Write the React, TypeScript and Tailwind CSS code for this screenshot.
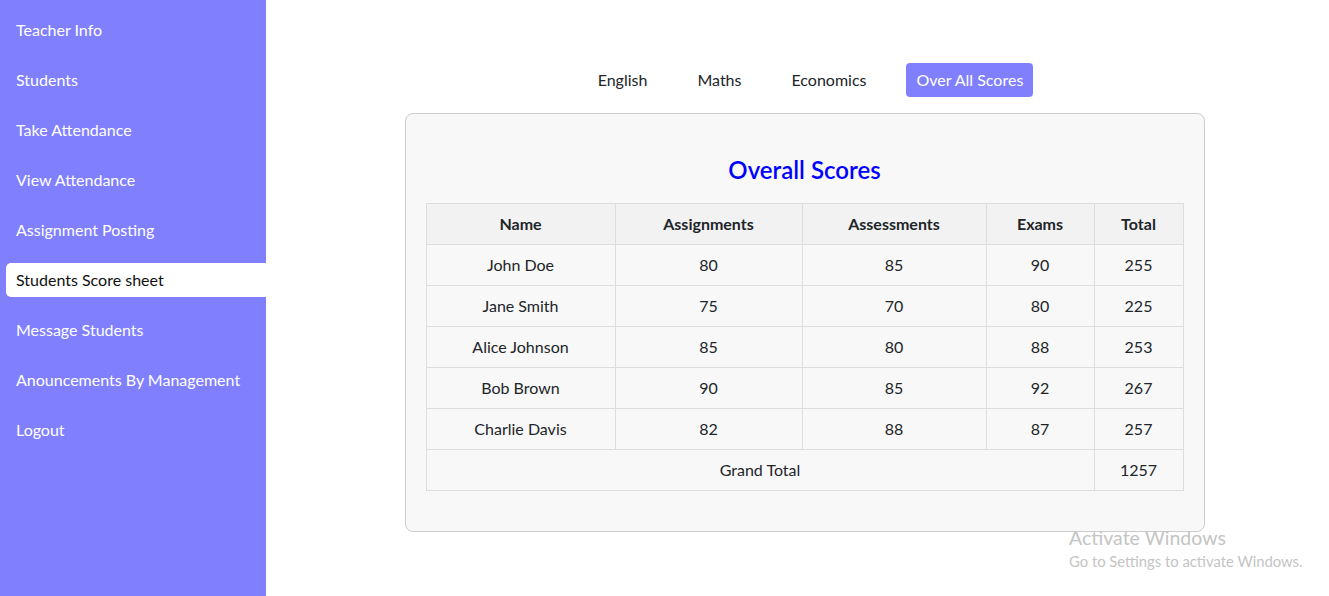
import React from "react";

const navItems = [
  "Teacher Info",
  "Students",
  "Take Attendance",
  "View Attendance",
  "Assignment Posting",
  "Students Score sheet",
  "Message Students",
  "Anouncements By Management",
  "Logout",
];

const rows = [
  ["John Doe", 80, 85, 90, 255],
  ["Jane Smith", 75, 70, 80, 225],
  ["Alice Johnson", 85, 80, 88, 253],
  ["Bob Brown", 90, 85, 92, 267],
  ["Charlie Davis", 82, 88, 87, 257],
];

const tabs = ["English", "Maths", "Economics", "Over All Scores"];

export default function App() {
  return (
    <div
      className="flex w-[1329px] h-[596px] bg-white text-[#212529] overflow-hidden relative"
      style={{ fontFamily: "Lato, 'Open Sans', sans-serif" }}
    >
      <aside className="w-[266px] shrink-0 bg-[#8080ff] pt-[13px]">
        <ul className="flex flex-col gap-[16px]">
          {navItems.map((item) => {
            const active = item === "Students Score sheet";
            return (
              <li
                key={item}
                className={
                  active
                    ? "ml-[6px] h-[34px] flex items-center pl-[10px] bg-white text-[#111] rounded-l-[5px] text-[16px]"
                    : "ml-[6px] h-[34px] flex items-center pl-[10px] text-white text-[16px]"
                }
              >
                {item}
              </li>
            );
          })}
        </ul>
      </aside>

      <main className="flex-1 flex flex-col items-center pt-[63px] pl-[14px]">
        <div className="flex gap-[30px] pl-[12px]">
          {tabs.map((t) => {
            const active = t === "Over All Scores";
            return (
              <button
                key={t}
                className={
                  active
                    ? "h-[34px] px-[10px] rounded-[4px] bg-[#8080ff] text-white text-[16px]"
                    : "h-[34px] px-[10px] rounded-[4px] text-[#212529] text-[16px]"
                }
              >
                {t}
              </button>
            );
          })}
        </div>

        <div className="mt-[16px] w-[800px] border border-[#cccccc] rounded-[8px] bg-[#f8f8f8] p-[20px]">
          <h2 className="mt-[20px] mb-[17px] h-[32px] leading-[32px] text-center text-[24px] font-semibold text-[#0000ff]">
            Overall Scores
          </h2>
          <table className="w-full border-collapse text-[16px] table-fixed">
            <colgroup>
              <col className="w-[189px]" />
              <col className="w-[187px]" />
              <col className="w-[184px]" />
              <col className="w-[108px]" />
              <col className="w-[89px]" />
            </colgroup>
            <thead>
              <tr className="bg-[#f2f2f2] h-[41px]">
                {["Name", "Assignments", "Assessments", "Exams", "Total"].map((h) => (
                  <th key={h} className="border border-[#dddddd] font-bold text-center p-0">
                    {h}
                  </th>
                ))}
              </tr>
            </thead>
            <tbody>
              {rows.map((r) => (
                <tr key={r[0] as string} className="h-[41px]">
                  {r.map((c, i) => (
                    <td key={i} className="border border-[#dddddd] text-center p-0">
                      {c}
                    </td>
                  ))}
                </tr>
              ))}
              <tr className="h-[41px]">
                <td colSpan={4} className="border border-[#dddddd] text-center p-0">
                  Grand Total
                </td>
                <td className="border border-[#dddddd] text-center p-0">1257</td>
              </tr>
            </tbody>
          </table>
          <div className="h-[20px]" />
        </div>
      </main>

      <div className="absolute left-[1069px] top-[525px] text-[#c4c4c4] pointer-events-none">
        <div className="text-[19.5px] leading-[26px]">Activate Windows</div>
        <div className="text-[14.8px] leading-[18px] mt-[1px]">Go to Settings to activate Windows.</div>
      </div>
    </div>
  );
}
